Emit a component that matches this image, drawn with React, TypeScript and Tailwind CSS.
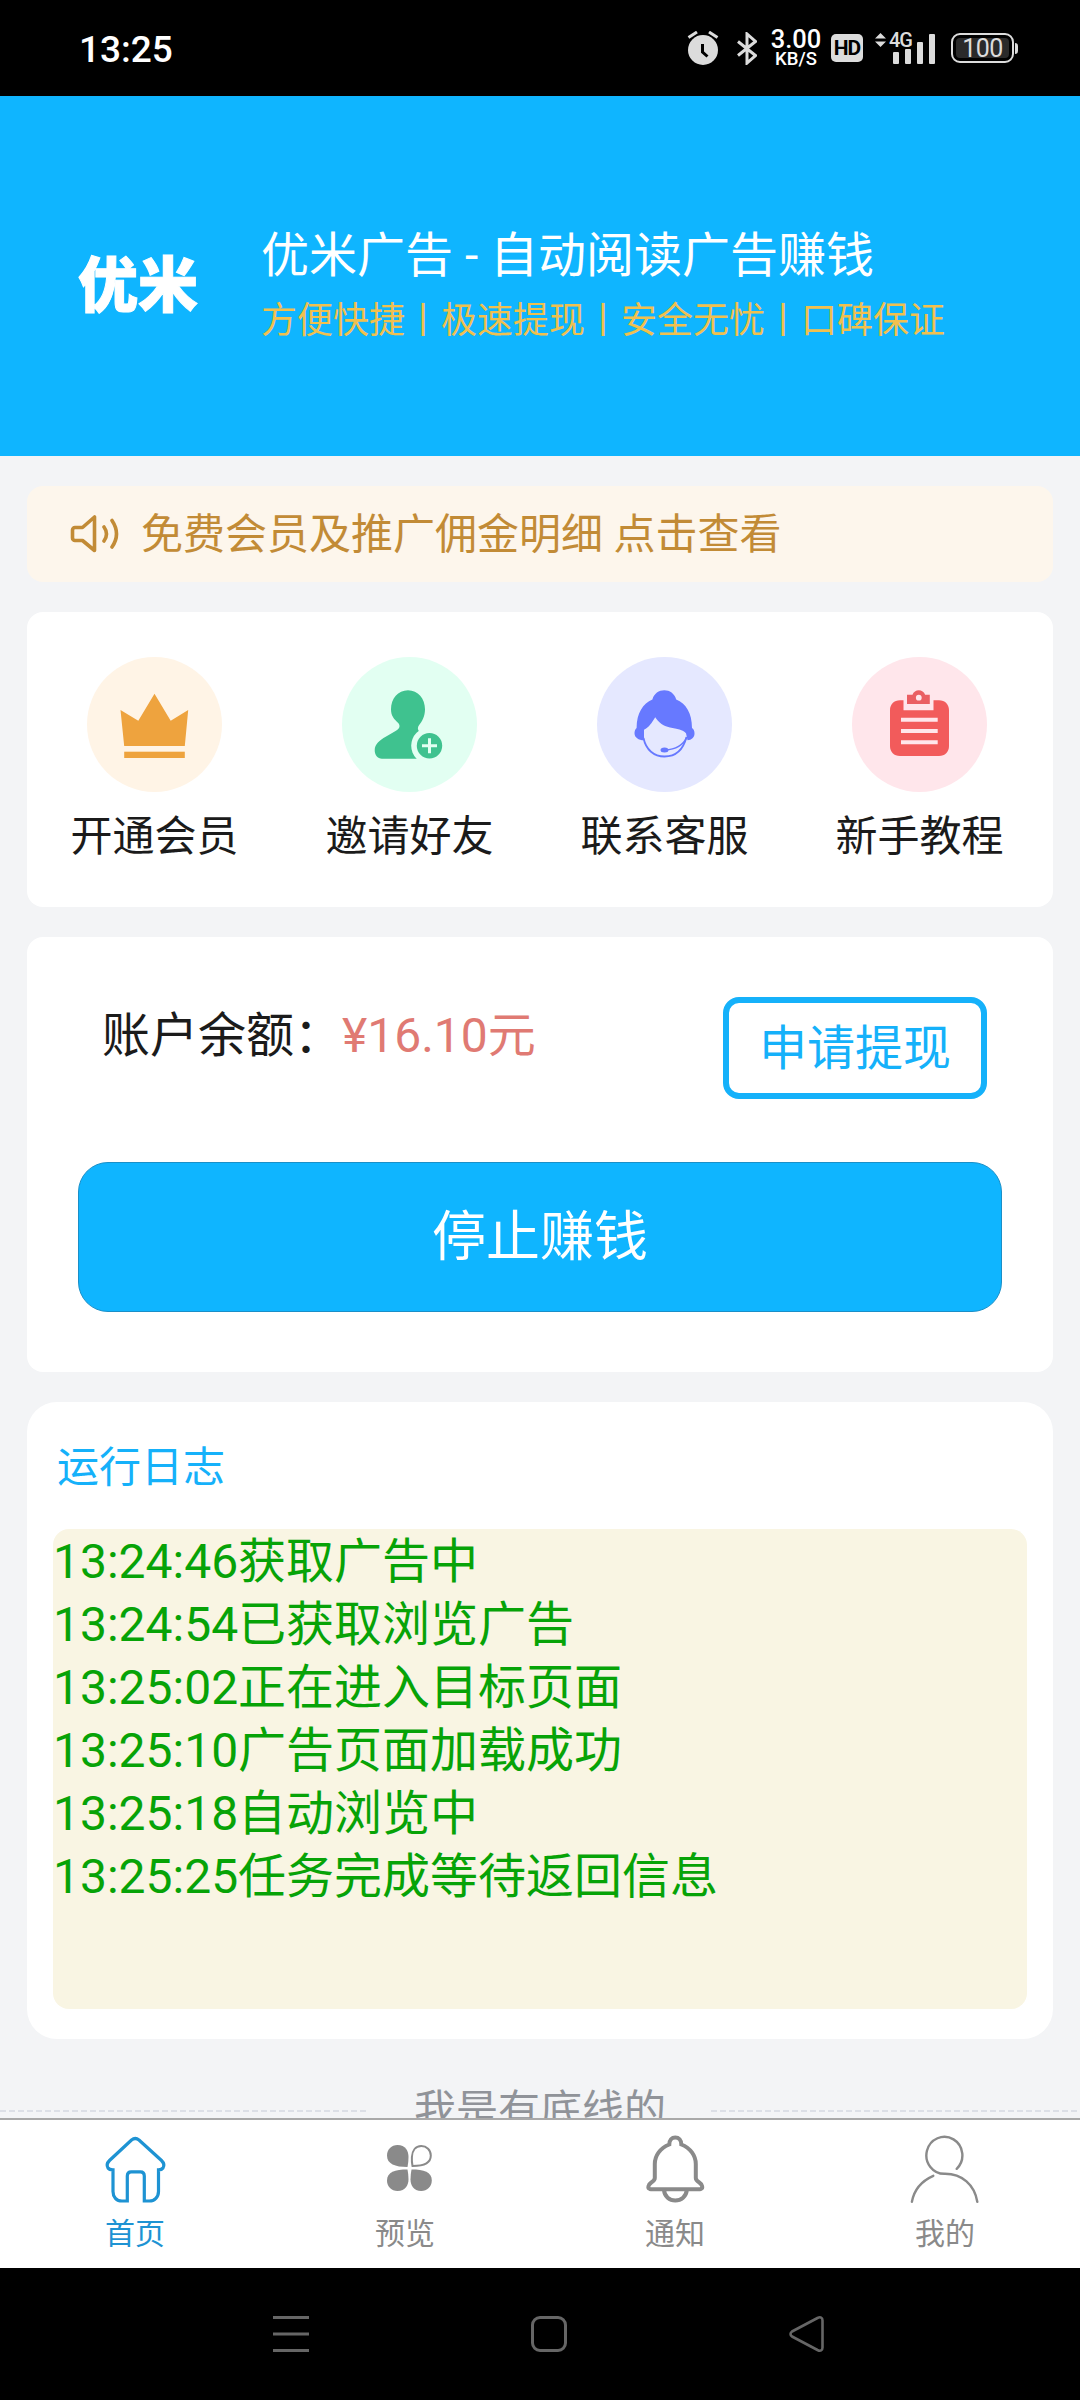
import type { ReactNode } from 'react';
import { clsx } from 'clsx';

const services = [
  { name: '开通会员', icon: <CrownIcon /> },
  { name: '邀请好友', icon: <InviteIcon /> },
  { name: '联系客服', icon: <SupportIcon /> },
  { name: '新手教程', icon: <GuideIcon /> },
];

const logs = [
  { time: '13:24:46', text: '获取广告中' },
  { time: '13:24:54', text: '已获取浏览广告' },
  { time: '13:25:02', text: '正在进入目标页面' },
  { time: '13:25:10', text: '广告页面加载成功' },
  { time: '13:25:18', text: '自动浏览中' },
  { time: '13:25:25', text: '任务完成等待返回信息' },
];

const tabs = [
  { name: '首页', icon: <HomeIcon />, active: true },
  { name: '预览', icon: <CloverIcon />, active: false },
  { name: '通知', icon: <BellIcon />, active: false },
  { name: '我的', icon: <ProfileIcon />, active: false },
];

function CrownIcon() {
  return (
    <svg viewBox="0 0 135 135" className="size-[135px]">
      <circle cx="67.5" cy="67.5" r="67.5" fill="#fff4e6" />
      <path d="M33.500 53 51.3 63.7 67.5 36.7 83.7 63.7 101.2 53 97.8 89H37.2Z" fill="#eea33e" />
      <rect x="37.2" y="94.7" width="60.6" height="6.3" fill="#eea33e" />
    </svg>
  );
}

function InviteIcon() {
  return (
    <svg viewBox="0 0 135 135" className="size-[135px]">
      <circle cx="67.5" cy="67.5" r="67.5" fill="#e2fff2" />
      <path
        d="M66 33.3c10 0 17 8.5 17 19 0 7-3 12.5-6 16-1.5 2-1.5 4 0 6l8 5v22.400H40c-4.500 0-7.300-3.700-7.300-8.500 0-6 5-10 11-13.500l9-5.200c5-2.500 6-5.500 3.500-8.500C52 62 49 59 49 52.300c0-10.500 7-19 17-19Z"
        fill="#3fc28f"
      />
      <circle cx="87.500" cy="88.700" r="18.300" fill="#e2fff2" />
      <circle cx="87.500" cy="88.700" r="12.700" fill="#3fc28f" />
      <path d="M80 88.700h15M87.500 81.200v15" stroke="#e2fff2" strokeWidth="3" />
    </svg>
  );
}

function SupportIcon() {
  return (
    <svg viewBox="0 0 135 135" className="size-[135px]">
      <circle cx="67.5" cy="67.5" r="67.5" fill="#e5e8ff" />
      <path
        d="M55.400 42.500C57 36.500 62 33.300 67.300 33.300S77.500 36.500 79.200 42.500C89 46.500 95 56 95 71c1.800 1.300 2.500 3.200 2.500 5.500 0 3.800-3 6.700-7 6.700l-1.500-7C86 72.500 80 72 73 70.500c-7-1.500-11.500-5-14.800-10.200C55 65.500 52 70.500 47 72.700v10.500c-5.500 0-9.500-2.700-9.500-7 0-2.200.700-3.900 2.100-5.200C39.600 56 46 46.500 55.400 42.500Z"
        fill="#6779ff"
      />
      <path d="M46.500 81c2.500 12 10.500 18.500 21 18.500S86 93.500 89.500 80" fill="none" stroke="#6779ff" strokeWidth="1.800" />
      <path d="M90 80c-4 8.500-11 12.500-22 13" fill="none" stroke="#6779ff" strokeWidth="1.600" />
      <ellipse cx="67.500" cy="93" rx="4" ry="2.500" fill="#6779ff" />
    </svg>
  );
}

function GuideIcon() {
  return (
    <svg viewBox="0 0 135 135" className="size-[135px]">
      <circle cx="67.5" cy="67.5" r="67.5" fill="#ffe6eb" />
      <path
        d="M48 43.300h3.500v10h30v-10H87c6 0 10 4 10 10V89c0 6-4 10-10 10H48c-6 0-10-4-10-10V53.300c0-6 4-10 10-10Z"
        fill="#f25b5b"
      />
      <path
        fillRule="evenodd"
        d="M55 37.700h5.500c1-2.700 3.500-4.400 6.300-4.400s5.300 1.700 6.300 4.400h4.700V47H55Zm11.800.1a2.900 2.900 0 1 0 0 5.800 2.900 2.900 0 0 0 0-5.800Z"
        fill="#ea5f63"
      />
      <path d="M49 62.700h36.700M49 74h36.700M49 85.300h36.700" stroke="#ffe6eb" strokeWidth="4" />
    </svg>
  );
}

function HomeIcon() {
  return (
    <svg viewBox="0 0 72 72" className="size-[72px]" fill="none" stroke="currentColor" strokeWidth="3.200">
      <path d="M32.500 6c2.500-2 5-2 7.500 0l22.500 20.500c2.500 2.500 3 5 1.500 7.500-1 1.500-2.500 1.800-4.500 1.800V57.500c0 5.500-4 9.500-9.200 9.500h-5V42c0-2.800-1.200-4.200-4-4.200h-9c-2.800 0-4 1.400-4 4.200V67h-5.300c-5.500 0-9-4-9-9.500V35.800c-2.300 0-4-.3-5-1.800-1.500-2.500-1-5 1.500-7.500Z" />
    </svg>
  );
}

function CloverIcon() {
  return (
    <svg viewBox="0 0 72 72" className="size-[72px]" fill="currentColor">
      <path d="M38.500 33C26 33 18 30 18 21.500 18 15.500 22.500 11 28.500 11c8 0 11 6 11 12Q39.500 28 38.500 33Z" />
      <path d="M38.500 35.500C26 35.500 18 38 18 46.500 18 52.500 22.500 57 28.500 57c8 0 11-6 11-11.500Q39.500 40 38.500 35.500Z" />
      <path d="M42.500 35.500c12.500 0 20.300 2.500 20.300 11C62.800 52.500 58 57 52.300 57c-8 0-10.800-6-10.800-11.500Q41.500 40 42.500 35.500Z" />
      <path
        d="M43.500 32c-.6-3-.8-6-.6-9 .3-6 3.300-11 9.400-11 5.300 0 9.500 4 9.500 9.500 0 7.500-6.500 10.500-18.300 10.500Z"
        fill="none"
        stroke="currentColor"
        strokeWidth="2"
      />
    </svg>
  );
}

function BellIcon() {
  return (
    <svg viewBox="0 0 72 72" className="size-[72px]" fill="none" stroke="currentColor" strokeWidth="4">
      <path d="M30.300 10.500c0-4.500 2.500-7 6-7s6 2.500 6 7c9 3.500 14.500 11 14.500 19.500V44c0 2 1 3 3.500 4.500 3 2 4 5.500 1.500 6.500-1 .3-2 .3-3 .3H13.800c-1 0-2 0-3-.3-2.500-1-1.500-4.500 1.500-6.500 2.500-1.500 3.500-2.500 3.500-4.500V30c0-8.500 5.500-16 14.500-19.500Z" />
      <path d="M25 56c.5 6.500 5.500 10.500 11.300 10.500S47.300 62.500 47.800 56" />
    </svg>
  );
}

function ProfileIcon() {
  return (
    <svg viewBox="0 0 72 72" className="size-[72px]" fill="none" stroke="currentColor" strokeWidth="2.400" strokeLinecap="round">
      <path d="M47.700 34.800A18 18.500 0 1 0 36 39.800c17 0 29.500 11 32.300 28" />
      <path d="M24.300 41.800C12.500 47 5 56 2.900 67.800" />
    </svg>
  );
}

function StatusBar() {
  return (
    <div className="flex h-24 items-center bg-black pl-[79px] text-[#dcdcdc]">
      <span className="mt-0.5 w-[608px] text-[37px] leading-none font-medium text-white">13:25</span>
      <svg viewBox="0 0 32 34" className="h-[34px] w-8">
        <circle cx="16" cy="19" r="15" fill="currentColor" />
        <path d="M1.500 6.500 10 1M30.500 6.500 22 1" stroke="currentColor" strokeWidth="3" />
        <path d="M15.500 13v8l5 4.500" fill="none" stroke="#000" strokeWidth="3" />
      </svg>
      <svg viewBox="0 0 20 33" className="ml-[18px] h-[33px] w-5" fill="none" stroke="currentColor" strokeWidth="3">
        <path d="M1 9.500 18.500 23.500 10 31V2l8.500 7.500L1 23.500" />
      </svg>
      <div className="ml-3 flex w-[54px] flex-col items-center font-medium text-white">
        <span className="text-[25.500px] leading-[22px]">3.00</span>
        <span className="text-[18.500px] leading-[18px]">KB/S</span>
      </div>
      <span className="ml-2 flex h-7 w-8 items-center justify-center rounded-[5px] bg-[#dcdcdc] text-[21px] leading-none font-bold tracking-[-1px] text-black">
        HD
      </span>
      <div className="ml-3 grid h-[33px] w-[61px]">
        <svg viewBox="0 0 61 33" className="col-start-1 row-start-1 h-[33px] w-[61px]" fill="currentColor">
          <path d="M0 6.500 5.500 1 11 6.500ZM0 9.500h11L5.500 15Z" />
          <rect x="18" y="20" width="6" height="12" rx="1" />
          <rect x="30" y="17" width="6" height="15" rx="1" />
          <rect x="42" y="10" width="6" height="22" rx="1" />
          <rect x="54" y="2" width="6" height="30" rx="1" />
        </svg>
        <span className="col-start-1 row-start-1 ml-3.5 text-[20px] leading-4 font-medium tracking-[-1px]">4G</span>
      </div>
      <div className="ml-[15px] flex items-center gap-px">
        <div className="h-[30px] w-[63px] rounded-[9px] border-2 border-current p-[3px]">
          <div className="flex h-full items-center justify-center rounded bg-[#2a2a2a] text-[25px] leading-none tracking-[-0.500px]">100</div>
        </div>
        <div className="h-[11px] w-[3px] rounded-r bg-current" />
      </div>
    </div>
  );
}

function Header() {
  return (
    <header className="flex h-[360px] bg-[#0fb5ff] pt-[127px] pl-[78px] text-white">
      <div className="mt-8 w-[183px] text-[60px] leading-[64px] font-black [-webkit-text-stroke:1px_white]">优米</div>
      <div>
        <h1 className="text-[48px] leading-[66px]">优米广告 - 自动阅读广告赚钱</h1>
        <p className="text-[36px] leading-[64px] text-[#f0c04f]">方便快捷丨极速提现丨安全无忧丨口碑保证</p>
      </div>
    </header>
  );
}

function Card({ className, children }: { className?: string; children: ReactNode }) {
  return <section className={clsx('mx-[27px] bg-white', className)}>{children}</section>;
}

export default function App() {
  return (
    <div className="flex h-[2400px] w-[1080px] flex-col overflow-hidden bg-[#f3f4f6] font-['Roboto','Noto_Sans_CJK_SC',sans-serif] text-[#1b1b1b]">
      <StatusBar />

      <main className="h-[2022px] overflow-hidden">
        <Header />

        <div className="mx-[27px] mt-[30px] flex h-24 items-center rounded-2xl bg-[#fdf6ec] pl-[43px] text-[#c28b36]">
          <svg viewBox="0 0 51 42" className="h-[42px] w-[51px]" fill="none" stroke="currentColor" strokeWidth="3.600" strokeLinecap="round" strokeLinejoin="round">
            <path d="M5 14.500h7.500L24.500 4v33.500L12.500 27.500H5a2.500 2.500 0 0 1-2.500-2.500v-8A2.500 2.500 0 0 1 5 14.500Z" />
            <path d="M34 14q5 7 0 14M42 7.500q9 13.500 0 26.500" />
          </svg>
          <span className="mt-0.5 ml-5 text-[42px] leading-none">免费会员及推广佣金明细 点击查看</span>
        </div>

        <Card className="mt-[30px] h-[295px] rounded-2xl pt-[45px]">
          <div className="grid w-[1020px] grid-cols-4">
            {services.map((item) => (
              <div key={item.name} className="flex flex-col items-center">
                {item.icon}
                <span className="mt-[13px] text-[42px] leading-[64px]">{item.name}</span>
              </div>
            ))}
          </div>
        </Card>

        <Card className="mt-[30px] h-[435px] rounded-2xl px-[51px] pt-[60px]">
          <div className="flex justify-between pr-[15px] pl-6 text-[48px]">
            <p className="mt-1.5 flex leading-[66px]">
              <span>账户余额</span>
              <span>：</span>
              <span className="text-[#e07a73]">¥16.10元</span>
            </p>
            <button className="h-[102px] w-[264px] rounded-2xl border-[6px] border-[#15b1fa] pt-0.5 leading-[88px] text-[#15b1fa]">
              申请提现
            </button>
          </div>
          <button className="mt-[63px] h-[150px] w-full rounded-[30px] border border-[#1a8fc8] bg-[#0fb5ff] text-[54px] text-white">
            停止赚钱
          </button>
        </Card>

        <Card className="mt-[30px] h-[637px] rounded-[30px] px-[26px] pt-[34px]">
          <h2 className="pl-1 text-[42px] leading-[64px] text-[#15b1fa]">运行日志</h2>
          <div className="mt-[29px] h-[480px] rounded-2xl bg-[#f9f5e3] pt-px text-[48px] leading-[63px] text-[#07a307]">
            {logs.map((log) => (
              <p key={log.time}>
                {log.time}
                {log.text}
              </p>
            ))}
          </div>
        </Card>

        {/* end-of-list divider, partly hidden by the tab bar */}
        <div className="mt-10 flex h-16 items-center text-[42px] leading-[64px] text-[#909399]">
          <i className="h-0.5 w-[369px] bg-[repeating-linear-gradient(90deg,#dcdfe6_0_6px,transparent_6px_9px)]" />
          <span className="w-[342px] text-center">我是有底线的</span>
          <i className="h-0.5 w-[369px] bg-[repeating-linear-gradient(90deg,#dcdfe6_0_6px,transparent_6px_9px)]" />
        </div>
      </main>

      <nav className="grid h-[150px] grid-cols-4 border-t-2 border-[#a9a9a9] bg-white pt-3.5">
        {tabs.map((tab) => (
          <div key={tab.name} className={clsx('flex flex-col items-center', tab.active ? 'text-[#1e93d3]' : 'text-[#8a8a8a]')}>
            {tab.icon}
            <span className="mt-1.5 text-[30px] leading-[44px]">{tab.name}</span>
          </div>
        ))}
      </nav>

      <div className="flex h-[132px] items-center bg-black pl-[273px] text-[#666]">
        <svg viewBox="0 0 36 36" className="size-9" stroke="currentColor" strokeWidth="3">
          <path d="M0 1.500h36M0 18h36M0 34.500h36" />
        </svg>
        <div className="ml-[222px] size-9 rounded-[9px] border-[3px] border-current" />
        <svg viewBox="0 0 36 36" className="ml-[222px] size-9" fill="none" stroke="currentColor" strokeWidth="2.600" strokeLinejoin="round">
          <path d="M3 15.500 28.500 2c3-1.500 5-.5 5 2.500v27c0 3-2 4-5 2.500L3 20.500c-2-1.500-2-3.500 0-5Z" />
        </svg>
      </div>
    </div>
  );
}
